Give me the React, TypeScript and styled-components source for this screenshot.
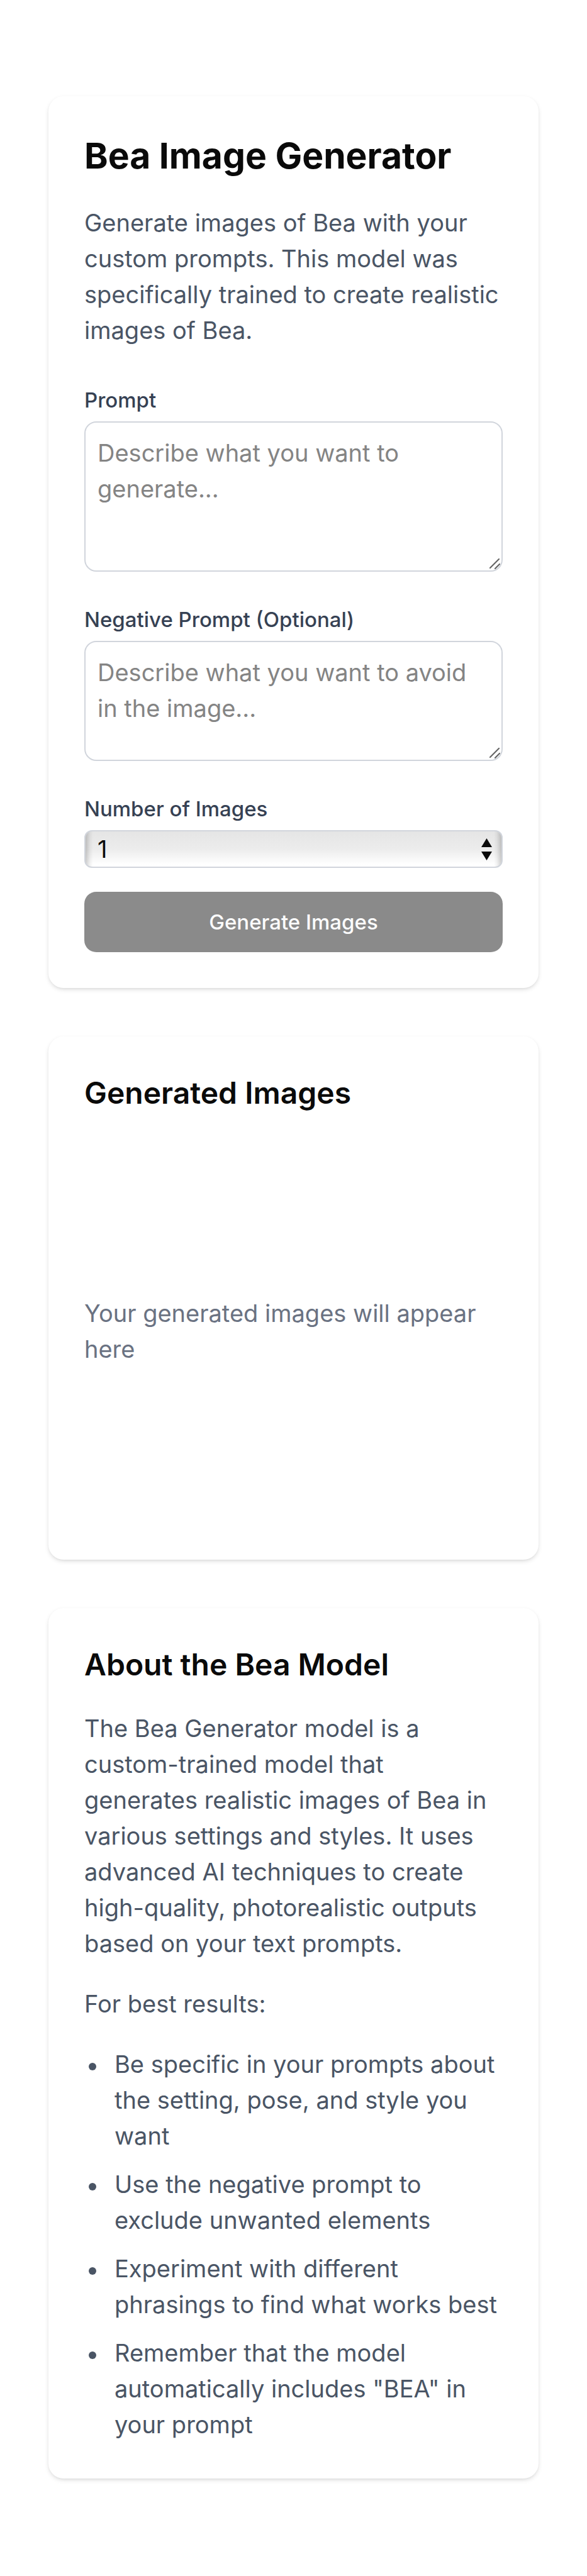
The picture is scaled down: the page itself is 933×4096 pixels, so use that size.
import React, { useState } from "react";
import styled, { createGlobalStyle } from "styled-components";

const GlobalStyle = createGlobalStyle`
  *, *::before, *::after { box-sizing: border-box; }
  body {
    margin: 0;
    background: #ffffff;
    color: #0a0a0a;
    font-family: Inter, "Liberation Sans", sans-serif;
    font-size: 38px;
    line-height: 57px;
  }
  h1, h2, p, ul { margin: 0; }
`;

const Page = styled.main`
  display: flex;
  flex-direction: column;
  gap: 77px;
  padding: 153px 77px;
`;

const Card = styled.section`
  display: flex;
  flex-direction: column;
  padding: 57px;
  border-radius: 24px;
  background: #ffffff;
  box-shadow: 0 3px 7px rgba(0, 0, 0, 0.1), 0 2px 5px -2px rgba(0, 0, 0, 0.1);
`;

const Title = styled.h1`
  margin-bottom: 41px;
  font-size: 57px;
  font-weight: 700;
  line-height: 75px;
`;

const Heading = styled.h2`
  margin-bottom: 41px;
  font-size: 48px;
  font-weight: 600;
  line-height: 65px;
`;

const Text = styled.p`
  color: #4a5565;
`;

const Form = styled.form`
  display: flex;
  flex-direction: column;
  gap: 52px;
  margin-top: 58px;
`;

const Actions = styled.div`
  display: flex;
  flex-direction: column;
  gap: 38px;
`;

const Field = styled.div`
  display: flex;
  flex-direction: column;
  gap: 10px;
`;

const Label = styled.label`
  color: #364153;
  font-size: 33px;
  font-weight: 500;
  line-height: 48px;
`;

const ControlBox = styled.div`
  position: relative;
  display: flex;
`;

const TextArea = styled.textarea<{ $height: number }>`
  flex: 1;
  min-width: 0;
  height: ${(p) => p.$height}px;
  padding: 20px 19px;
  border: 2px solid #d1d5dc;
  border-radius: 19px;
  background: transparent;
  color: inherit;
  font: inherit;
  resize: none;
  overflow: hidden;

  &::placeholder {
    color: #848484;
    opacity: 1;
  }
`;

const Grip = styled.svg`
  position: absolute;
  right: 4px;
  bottom: 4px;
  pointer-events: none;
`;

const Select = styled.select`
  flex: 1;
  min-width: 0;
  height: 60px;
  padding: 0 19px;
  border: 2px solid #d1d5dc;
  border-radius: 12px;
  appearance: none;
  background:
    linear-gradient(to right, rgba(0, 0, 0, 0.19), rgba(0, 0, 0, 0.05) 7px, transparent 12px),
    linear-gradient(to left, rgba(0, 0, 0, 0.19), rgba(0, 0, 0, 0.05) 7px, transparent 12px),
    linear-gradient(#e5e5e5, #ececec 50%, #ffffff 94%);
  color: #0a0a0a;
  font: inherit;
`;

const Arrows = styled.svg`
  position: absolute;
  right: 17px;
  top: 12px;
  pointer-events: none;
`;

const SubmitButton = styled.button`
  height: 96px;
  border: 0;
  border-radius: 19px;
  background: #171718;
  color: #fafafa;
  font: inherit;
  font-size: 33px;
  font-weight: 500;

  &:disabled {
    opacity: 0.5;
  }
`;

const EmptyState = styled.div`
  display: flex;
  align-items: center;
  min-height: 612px;
  color: #6a7282;
`;

const Copy = styled.div`
  display: flex;
  flex-direction: column;
  gap: 39px;
  color: #4a5565;
`;

const Tips = styled.ul`
  display: flex;
  flex-direction: column;
  gap: 20px;
  padding-left: 7px;
  list-style: none;
`;

const Tip = styled.li`
  display: flex;
  gap: 29px;

  &::before {
    content: "";
    flex: none;
    width: 12px;
    height: 12px;
    margin-top: 26px;
    border-radius: 50%;
    background: currentColor;
  }
`;

const tips = [
  "Be specific in your prompts about the setting, pose, and style you want",
  "Use the negative prompt to exclude unwanted elements",
  "Experiment with different phrasings to find what works best",
  'Remember that the model automatically includes "BEA" in your prompt',
];

function ResizeGrip() {
  return (
    <Grip width="18" height="18" viewBox="0 0 18 18" aria-hidden="true">
      <path d="M2 16 16 2M10 17 17 10" stroke="#666666" strokeWidth="2.2" strokeLinecap="round" />
    </Grip>
  );
}

type PromptFieldProps = {
  id: string;
  label: string;
  placeholder: string;
  height: number;
  value: string;
  onChange: (value: string) => void;
};

function PromptField({ id, label, placeholder, height, value, onChange }: PromptFieldProps) {
  return (
    <Field>
      <Label htmlFor={id}>{label}</Label>
      <ControlBox>
        <TextArea
          id={id}
          $height={height}
          placeholder={placeholder}
          value={value}
          onChange={(e) => onChange(e.target.value)}
        />
        <ResizeGrip />
      </ControlBox>
    </Field>
  );
}

export default function App() {
  const [prompt, setPrompt] = useState("");
  const [negative, setNegative] = useState("");
  const [count, setCount] = useState("1");

  return (
    <>
      <GlobalStyle />
      <Page>
        <Card>
          <Title>Bea Image Generator</Title>
          <Text>
            Generate images of Bea with your custom prompts. This model was specifically trained to
            create realistic images of Bea.
          </Text>
          <Form onSubmit={(e) => e.preventDefault()}>
            <PromptField
              id="prompt"
              label="Prompt"
              placeholder="Describe what you want to generate..."
              height={239}
              value={prompt}
              onChange={setPrompt}
            />
            <PromptField
              id="negative-prompt"
              label="Negative Prompt (Optional)"
              placeholder="Describe what you want to avoid in the image..."
              height={191}
              value={negative}
              onChange={setNegative}
            />
            <Actions>
              <Field>
                <Label htmlFor="count">Number of Images</Label>
                <ControlBox>
                  <Select id="count" value={count} onChange={(e) => setCount(e.target.value)}>
                    <option value="1">1</option>
                    <option value="2">2</option>
                    <option value="3">3</option>
                    <option value="4">4</option>
                  </Select>
                  <Arrows width="17" height="36" viewBox="0 0 17 36" aria-hidden="true">
                    <path d="M8.5 1 17 15H0ZM0 22H17L8.5 36Z" fill="#0a0a0a" />
                  </Arrows>
                </ControlBox>
              </Field>
              <SubmitButton type="submit" disabled={!prompt.trim()}>
                Generate Images
              </SubmitButton>
            </Actions>
          </Form>
        </Card>

        <Card>
          <Heading>Generated Images</Heading>
          <EmptyState>
            <p>Your generated images will appear here</p>
          </EmptyState>
        </Card>

        <Card>
          <Heading>About the Bea Model</Heading>
          <Copy>
            <p>
              The Bea Generator model is a custom-trained model that generates realistic images of
              Bea in various settings and styles. It uses advanced AI techniques to create
              high-quality, photorealistic outputs based on your text prompts.
            </p>
            <p>For best results:</p>
            <Tips>
              {tips.map((tip) => (
                <Tip key={tip}>{tip}</Tip>
              ))}
            </Tips>
          </Copy>
        </Card>
      </Page>
    </>
  );
}
